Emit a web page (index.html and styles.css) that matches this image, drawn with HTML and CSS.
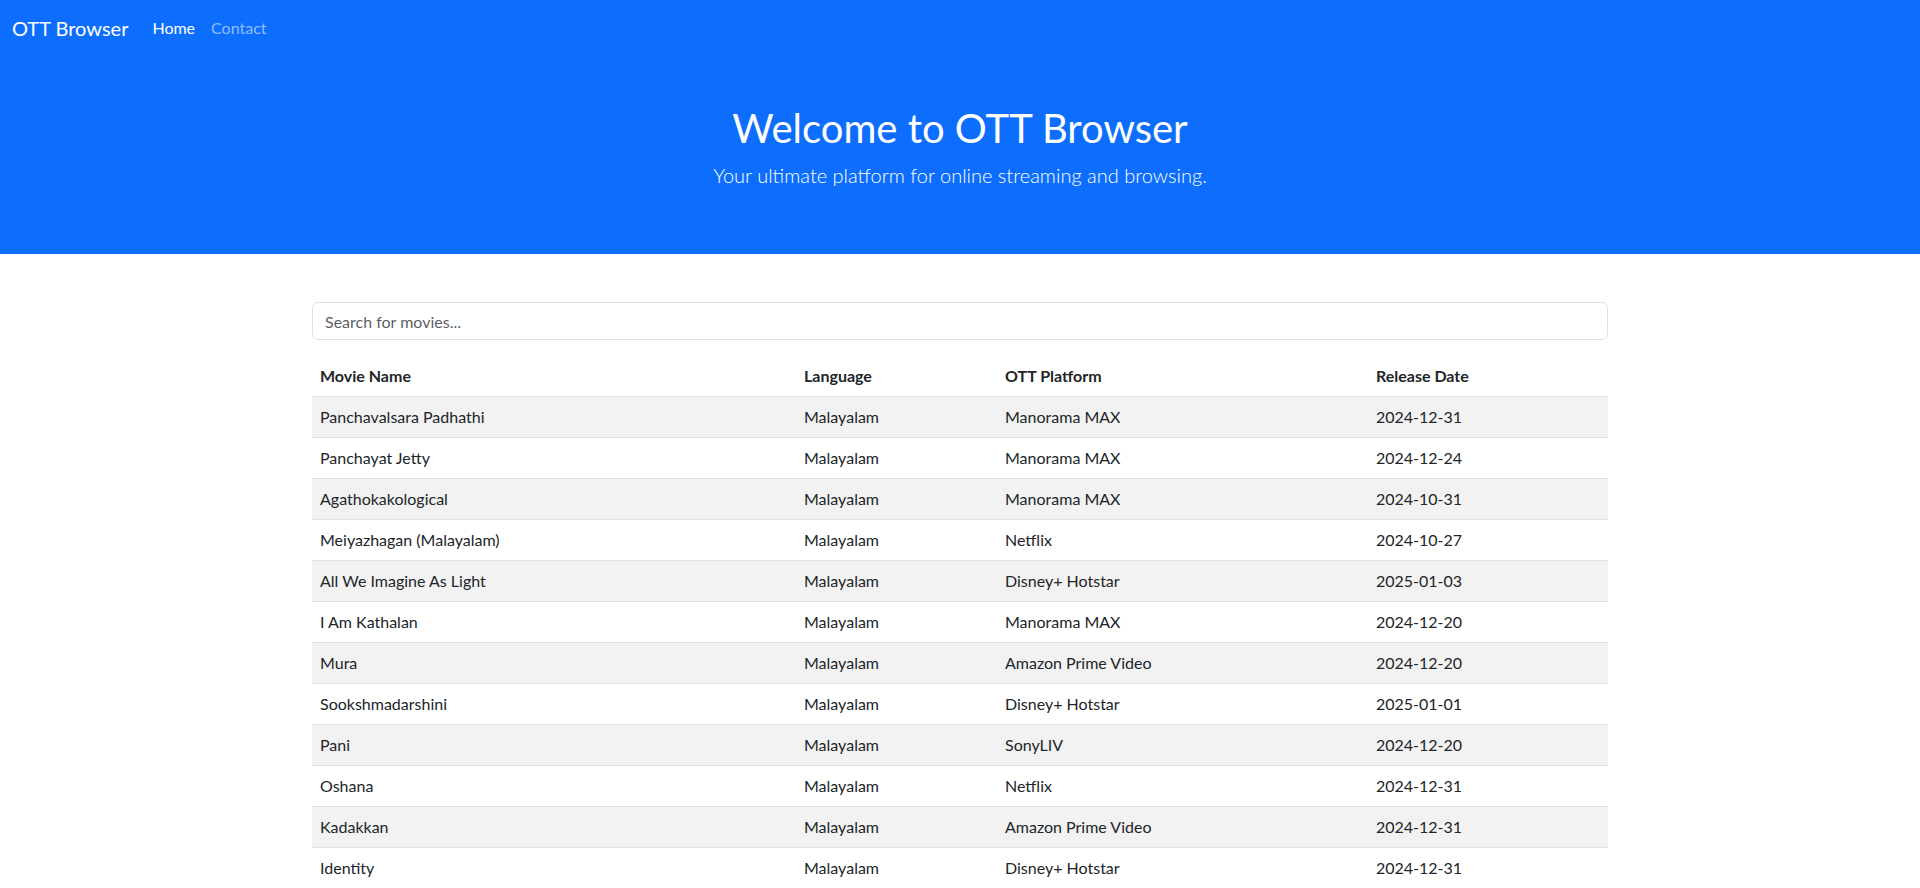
FILE: index.html
```html
<!DOCTYPE html>
<html lang="en">
<head>
<meta charset="utf-8">
<title>OTT Browser</title>
<link rel="stylesheet" href="styles.css">
</head>
<body>
<header class="top">
  <nav class="navbar">
    <a class="brand" href="#">OTT Browser</a>
    <ul class="nav">
      <li><a class="nav-link active" href="#">Home</a></li>
      <li><a class="nav-link" href="#">Contact</a></li>
    </ul>
  </nav>
  <section class="hero">
    <h1>Welcome to OTT Browser</h1>
    <p class="lead">Your ultimate platform for online streaming and browsing.</p>
  </section>
</header>
<main class="container">
  <input class="search" type="text" placeholder="Search for movies...">
  <table class="table">
    <colgroup>
      <col class="c1"><col class="c2"><col class="c3"><col class="c4">
    </colgroup>
    <thead>
      <tr><th>Movie Name</th><th>Language</th><th>OTT Platform</th><th>Release Date</th></tr>
    </thead>
    <tbody>
      <tr><td>Panchavalsara Padhathi</td><td>Malayalam</td><td>Manorama MAX</td><td>2024-12-31</td></tr>
      <tr><td>Panchayat Jetty</td><td>Malayalam</td><td>Manorama MAX</td><td>2024-12-24</td></tr>
      <tr><td>Agathokakological</td><td>Malayalam</td><td>Manorama MAX</td><td>2024-10-31</td></tr>
      <tr><td>Meiyazhagan (Malayalam)</td><td>Malayalam</td><td>Netflix</td><td>2024-10-27</td></tr>
      <tr><td>All We Imagine As Light</td><td>Malayalam</td><td>Disney+ Hotstar</td><td>2025-01-03</td></tr>
      <tr><td>I Am Kathalan</td><td>Malayalam</td><td>Manorama MAX</td><td>2024-12-20</td></tr>
      <tr><td>Mura</td><td>Malayalam</td><td>Amazon Prime Video</td><td>2024-12-20</td></tr>
      <tr><td>Sookshmadarshini</td><td>Malayalam</td><td>Disney+ Hotstar</td><td>2025-01-01</td></tr>
      <tr><td>Pani</td><td>Malayalam</td><td>SonyLIV</td><td>2024-12-20</td></tr>
      <tr><td>Oshana</td><td>Malayalam</td><td>Netflix</td><td>2024-12-31</td></tr>
      <tr><td>Kadakkan</td><td>Malayalam</td><td>Amazon Prime Video</td><td>2024-12-31</td></tr>
      <tr><td>Identity</td><td>Malayalam</td><td>Disney+ Hotstar</td><td>2024-12-31</td></tr>
    </tbody>
  </table>
</main>
</body>
</html>
```
FILE: styles.css
```css
* { box-sizing: border-box; }
html, body { margin: 0; padding: 0; }
body {
  font-family: Lato, "Open Sans", sans-serif;
  font-size: 16px;
  line-height: 1.5;
  color: #212529;
  background: #fff;
}
.top { background: #0d6efd; color: #fff; }
.navbar {
  display: flex;
  align-items: center;
  padding: 8px 12px;
}
.brand {
  font-size: 20px;
  line-height: 30px;
  padding: 5px 0;
  margin-right: 16px;
  color: #fff;
  text-decoration: none;
}
.nav { display: flex; list-style: none; margin: 0; padding: 0; }
.nav-link {
  display: block;
  padding: 8px;
  color: rgba(255,255,255,0.55);
  text-decoration: none;
}
.nav-link.active { color: #fff; }
.hero { text-align: center; padding: 48px 0; }
.hero h1 {
  margin: 0 0 8px;
  font-size: 40px;
  font-weight: 400;
  line-height: 1.2;
}
.lead { margin: 0 0 16px; font-size: 20px; font-weight: 300; line-height: 30px; }
.container { width: 1320px; margin: 48px auto 0; padding: 0 12px; }
.search {
  display: block;
  width: 100%;
  height: 38px;
  padding: 6px 12px;
  font: inherit;
  color: #212529;
  border: 1px solid #dee2e6;
  border-radius: 6px;
  margin-bottom: 16px;
  outline: none;
}
.search::placeholder { color: rgba(33,37,41,0.75); }
.table { width: 100%; border-collapse: collapse; table-layout: fixed; }
.c1 { width: 484px; } .c2 { width: 201px; } .c3 { width: 371px; } .c4 { width: 240px; }
.table th, .table td {
  text-align: left;
  padding: 8px;
  border-bottom: 1px solid #dee2e6;
  vertical-align: top;
}
.table th { font-weight: 700; }
.table tbody tr:nth-child(odd) td { background: #f2f2f2; }
```
